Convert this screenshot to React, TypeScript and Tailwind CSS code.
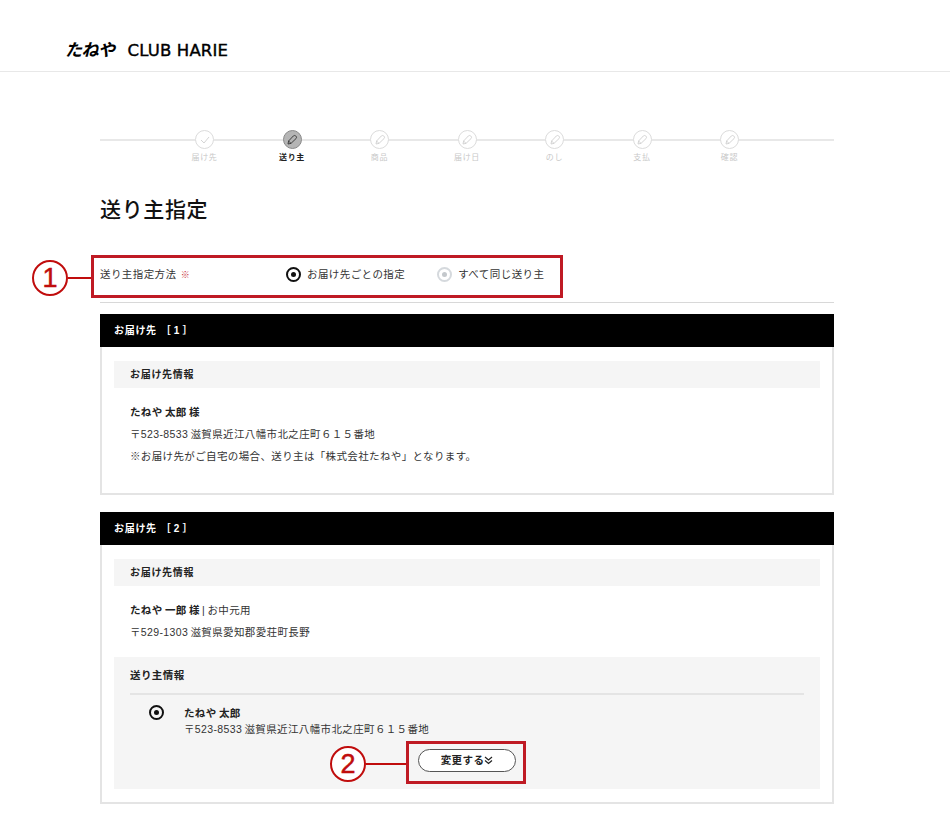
import React from 'react';

const steps = [
  { label: '届け先', state: 'done' },
  { label: '送り主', state: 'current' },
  { label: '商品', state: 'todo' },
  { label: '届け日', state: 'todo' },
  { label: 'のし', state: 'todo' },
  { label: '支払', state: 'todo' },
  { label: '確認', state: 'todo' },
];

const Pencil = ({ color }: { color: string }) => (
  <svg width="12" height="12" viewBox="0 0 12 12" fill="none" stroke={color} strokeWidth="0.9">
    <path d="M2 10 L2.6 7 L7.4 1.9 Q8.6 1 9.7 1.9 L10.1 2.3 Q11 3.4 10.1 4.5 L5 9.4 Z" />
    <path d="M2.6 7 L5 9.4" />
  </svg>
);

const Check = () => (
  <svg width="10" height="8" viewBox="0 0 10 8" fill="none" stroke="#d4d4d4" strokeWidth="1">
    <path d="M1 4 L4 7 L9 1" />
  </svg>
);

const Step = ({ label, state }: { label: string; state: string }) => {
  const current = state === 'current';
  return (
    <div className="w-[87.5px] flex flex-col items-center">
      <div
        className={
          current
            ? 'w-[19px] h-[19px] rounded-full border border-[#8a8a8a] bg-[#b5b5b5] flex items-center justify-center'
            : 'w-[19px] h-[19px] rounded-full border border-[#dcdcdc] bg-white flex items-center justify-center'
        }
      >
        {state === 'done' ? <Check /> : <Pencil color={current ? '#333333' : '#cfcfcf'} />}
      </div>
      <div
        className={
          current
            ? 'mt-[3px] text-[8px] leading-[12px] font-bold tracking-[0.08em] text-[#222222]'
            : 'mt-[3px] text-[8px] leading-[12px] tracking-[0.08em] text-[#c8c8c8]'
        }
      >
        {label}
      </div>
    </div>
  );
};

const Radio = ({ muted }: { muted?: boolean }) => (
  <span
    className={
      muted
        ? 'w-[15px] h-[15px] rounded-full border-2 border-[#d5d9dd] flex items-center justify-center shrink-0'
        : 'w-[15px] h-[15px] rounded-full border-2 border-[#111111] flex items-center justify-center shrink-0'
    }
  >
    <span className={muted ? 'w-[5px] h-[5px] rounded-full bg-[#c4c8cc]' : 'w-[5px] h-[5px] rounded-full bg-[#111111]'} />
  </span>
);

const Marker = ({ n, className }: { n: string; className: string }) => (
  <div className={`absolute flex items-center ${className}`}>
    <div className="w-[36px] h-[36px] rounded-full border-2 border-[#c00d0d] bg-white flex items-center justify-center text-[27px] leading-none text-[#c00d0d] font-['Liberation_Sans',sans-serif] [-webkit-text-stroke:0.5px_#c00d0d]">
      {n}
    </div>
    <div className="h-[2px] flex-1 bg-[#c00d0d]" />
  </div>
);

const DestinationCard = ({ title, no, children }: { title: string; no: string; children: React.ReactNode }) => (
  <section className="border-2 border-t-0 border-[#e4e4e4]">
    <h2 className="-mx-[2px] h-[33px] bg-black text-white text-[10px] font-bold tracking-[0.07em] pl-[14px] flex items-center">
      {title}
      <span className="ml-[4px] tracking-[0.3em]">［{no}］</span>
    </h2>
    <div className="px-[12px] pt-[14px]">
      <h3 className="h-[27px] bg-[#f5f5f5] pl-[16px] flex items-center text-[10px] font-bold tracking-[0.07em] text-[#222222]">
        お届け先情報
      </h3>
      {children}
    </div>
  </section>
);

export default function App() {
  return (
    <div className="relative min-h-[840px] bg-white text-[#333333] font-['Liberation_Sans','Noto_Sans_CJK_JP',sans-serif]">
      <header className="h-[72px] border-b border-[#e8e8e8] pl-[65px] pt-[37px]">
        <div className="text-[17px] leading-[24px] text-black italic font-bold font-['Noto_Sans_CJK_JP',sans-serif] tracking-[-0.03em]">
          たねや
          <span className="ml-[13px] text-[16.5px] font-normal not-italic tracking-[0.01em] font-['DejaVu_Sans',sans-serif] [-webkit-text-stroke:0.4px_black]">
            CLUB HARIE
          </span>
        </div>
      </header>

      <main className="ml-[100px] w-[734px]">
        <div className="relative pt-[58px]">
          <div className="absolute left-0 right-0 top-[67px] h-[2px] bg-[#e8e8e8]" />
          <div className="relative flex justify-center">
            {steps.map((s) => (
              <Step key={s.label} label={s.label} state={s.state} />
            ))}
          </div>
        </div>

        <h1 className="mt-[29px] text-[21px] leading-[30px] font-medium tracking-[0.03em] text-[#111111] font-['Noto_Sans_CJK_JP',sans-serif]">
          送り主指定
        </h1>

        <div className="mt-[31px] h-[49px] flex items-center border-b border-[#d8d8d8] pb-[7px] text-[10.5px] tracking-[0.04em]">
          <div className="w-[186px]">
            送り主指定方法 <span className="ml-[1px] font-bold text-[#c8323a] text-[9px]">※</span>
          </div>
          <label className="flex items-center gap-[6px]">
            <Radio />
            お届け先ごとの指定
          </label>
          <label className="ml-[32px] flex items-center gap-[6px]">
            <Radio muted />
            すべて同じ送り主
          </label>
        </div>

        <div className="mt-[11px] flex flex-col gap-[17px]">
          <DestinationCard title="お届け先" no="1">
            <div className="pl-[16px] pt-[13px] pb-[26px] text-[10.5px] leading-[22px] tracking-[0.035em] [word-spacing:-1px]">
              <p className="font-bold text-[#222222]">たねや 太郎 様</p>
              <p>〒523-8533 滋賀県近江八幡市北之庄町６１５番地</p>
              <p>※お届け先がご自宅の場合、送り主は「株式会社たねや」となります。</p>
            </div>
          </DestinationCard>

          <DestinationCard title="お届け先" no="2">
            <div className="pl-[16px] pt-[13px] text-[10.5px] leading-[22px] tracking-[0.035em] [word-spacing:-1px]">
              <p>
                <span className="font-bold text-[#222222]">たねや 一郎 様</span> | お中元用
              </p>
              <p>〒529-1303 滋賀県愛知郡愛荘町長野</p>
            </div>
            <div className="mt-[14px] mb-[13px] h-[132px] bg-[#f5f5f5] px-[16px] pt-[8px]">
              <h3 className="h-[30px] border-b-2 border-[#e4e4e4] pb-[10px] text-[10.5px] leading-[20px] font-bold tracking-[0.04em] text-[#222222]">
                送り主情報
              </h3>
              <div className="flex pl-[19px] pt-[10px]">
                <Radio />
                <div className="ml-[20px] text-[10.5px] leading-[16px] tracking-[0.035em] [word-spacing:-1px]">
                  <p className="font-bold text-[#222222]">たねや 太郎</p>
                  <p>〒523-8533 滋賀県近江八幡市北之庄町６１５番地</p>
                </div>
              </div>
              <div className="pl-[288px] pt-[12px]">
                <button className="w-[98px] h-[23px] rounded-full border border-[#555555] bg-white flex items-center justify-center text-[10.5px] font-bold tracking-[0.04em] text-[#222222]">
                  変更する
                  <svg width="9" height="9" viewBox="0 0 9 9" fill="none" stroke="#222222" strokeWidth="1.2">
                    <path d="M1 1 L4.5 4 L8 1 M1 4.5 L4.5 7.5 L8 4.5" />
                  </svg>
                </button>
              </div>
            </div>
          </DestinationCard>
        </div>
      </main>

      <div className="absolute left-[91px] top-[255px] w-[472px] h-[43px] border-[3px] border-[#bf1a24]" />
      <div className="absolute left-[406px] top-[741px] w-[120px] h-[43px] border-[3px] border-[#bf1a24]" />
      <Marker n="1" className="left-[32px] top-[260px] w-[59px]" />
      <Marker n="2" className="left-[330px] top-[746px] w-[76px]" />
    </div>
  );
}
